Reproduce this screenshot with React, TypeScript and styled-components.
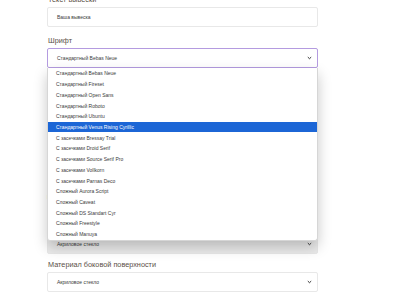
import styled, { createGlobalStyle } from "styled-components";

const GlobalStyle = createGlobalStyle`
  html, body {
    margin: 0;
    padding: 0;
    background: #ffffff;
    font-family: "Liberation Sans", Arial, sans-serif;
    overflow: hidden;
  }
`;

const Page = styled.div`
  width: 400px;
  height: 301px;
  overflow: hidden;
  padding-left: 47px;
  box-sizing: border-box;
`;

const Form = styled.div`
  width: 271px;
  margin-top: -5px;
  display: flex;
  flex-direction: column;
`;

const Field = styled.div<{ $gap?: number }>`
  position: relative;
  display: flex;
  flex-direction: column;
  gap: 3px;
  margin-bottom: ${({ $gap }) => $gap ?? 9}px;
`;

const Label = styled.div`
  font-size: 7.3px;
  line-height: 9px;
  color: #5a4f47;
  padding-left: 1px;
`;

const Box = styled.div<{ $focused?: boolean; $shaded?: boolean }>`
  height: 20px;
  box-sizing: border-box;
  border: ${({ $focused }) => ($focused ? "1.5px solid #b49be0" : "1px solid #e8e8e8")};
  border-radius: 2px;
  background: ${({ $shaded }) => ($shaded ? "#ebebeb" : "#ffffff")};
  display: flex;
  align-items: center;
  justify-content: space-between;
  padding: 0 5px 0 9px;
  font-size: 5px;
  color: #3a3a3a;
`;

const Hint = styled.div`
  font-size: 5px;
  line-height: 7px;
  color: #888;
`;

const Dropdown = styled.ul`
  position: absolute;
  left: 0;
  top: 100%;
  width: 271px;
  margin: 0;
  padding: 0;
  list-style: none;
  background: #ffffff;
  border: 1px solid #d6d6d6;
  border-top: none;
  border-radius: 0 0 3px 3px;
  box-sizing: border-box;
  box-shadow: 0 6px 14px rgba(0, 0, 0, 0.22);
  z-index: 5;
`;

const Option = styled.li<{ $active?: boolean }>`
  height: 10.73px;
  display: flex;
  align-items: center;
  padding-left: 8px;
  font-size: 5px;
  color: ${({ $active }) => ($active ? "#ffffff" : "#3a3a3a")};
  background: ${({ $active }) => ($active ? "#1c66d6" : "transparent")};
`;

const Chevron = () => (
  <svg width="5" height="4" viewBox="0 0 5 4">
    <path d="M0.8 1.1 L2.5 2.7 L4.2 1.1" fill="none" stroke="#333" strokeWidth="1" />
  </svg>
);

const fonts = [
  "Стандартный Bebas Neue",
  "Стандартный Fireset",
  "Стандартный Open Sans",
  "Стандартный Roboto",
  "Стандартный Ubuntu",
  "Стандартный Venus Rising Cyrillic",
  "С засечками Bressay Trial",
  "С засечками Droid Serif",
  "С засечками Source Serif Pro",
  "С засечками Vollkorn",
  "С засечками Parnas Deco",
  "Сложный Aurora Script",
  "Сложный Caveat",
  "Сложный DS Standart Cyr",
  "Сложный Freestyle",
  "Сложный Manuya",
];

export default function App() {
  return (
    <Page>
      <GlobalStyle />
      <Form>
        <Field>
          <Label>Текст вывески</Label>
          <Box>Ваша вывеска</Box>
        </Field>
        <Field>
          <Label>Шрифт</Label>
          <Box $focused>
            Стандартный Bebas Neue
            <Chevron />
          </Box>
          <Dropdown>
            {fonts.map((f, i) => (
              <Option key={f} $active={i === 5}>
                {f}
              </Option>
            ))}
          </Dropdown>
        </Field>
        <Field>
          <Label>Высота букв, см</Label>
          <Box>20</Box>
        </Field>
        <Field>
          <Label>Цвет лицевой части</Label>
          <Box>
            Белый
            <Chevron />
          </Box>
        </Field>
        <Field $gap={21}>
          <Label>Подсветка</Label>
          <Box>
            Лицевая
            <Chevron />
          </Box>
          <Hint>Выберите тип подсветки букв</Hint>
        </Field>
        <Field $gap={6}>
          <Label>Материал лицевой поверхности</Label>
          <Box $shaded>
            Акриловое стекло
            <Chevron />
          </Box>
        </Field>
        <Field>
          <Label>Материал боковой поверхности</Label>
          <Box>
            Акриловое стекло
            <Chevron />
          </Box>
        </Field>
      </Form>
    </Page>
  );
}
